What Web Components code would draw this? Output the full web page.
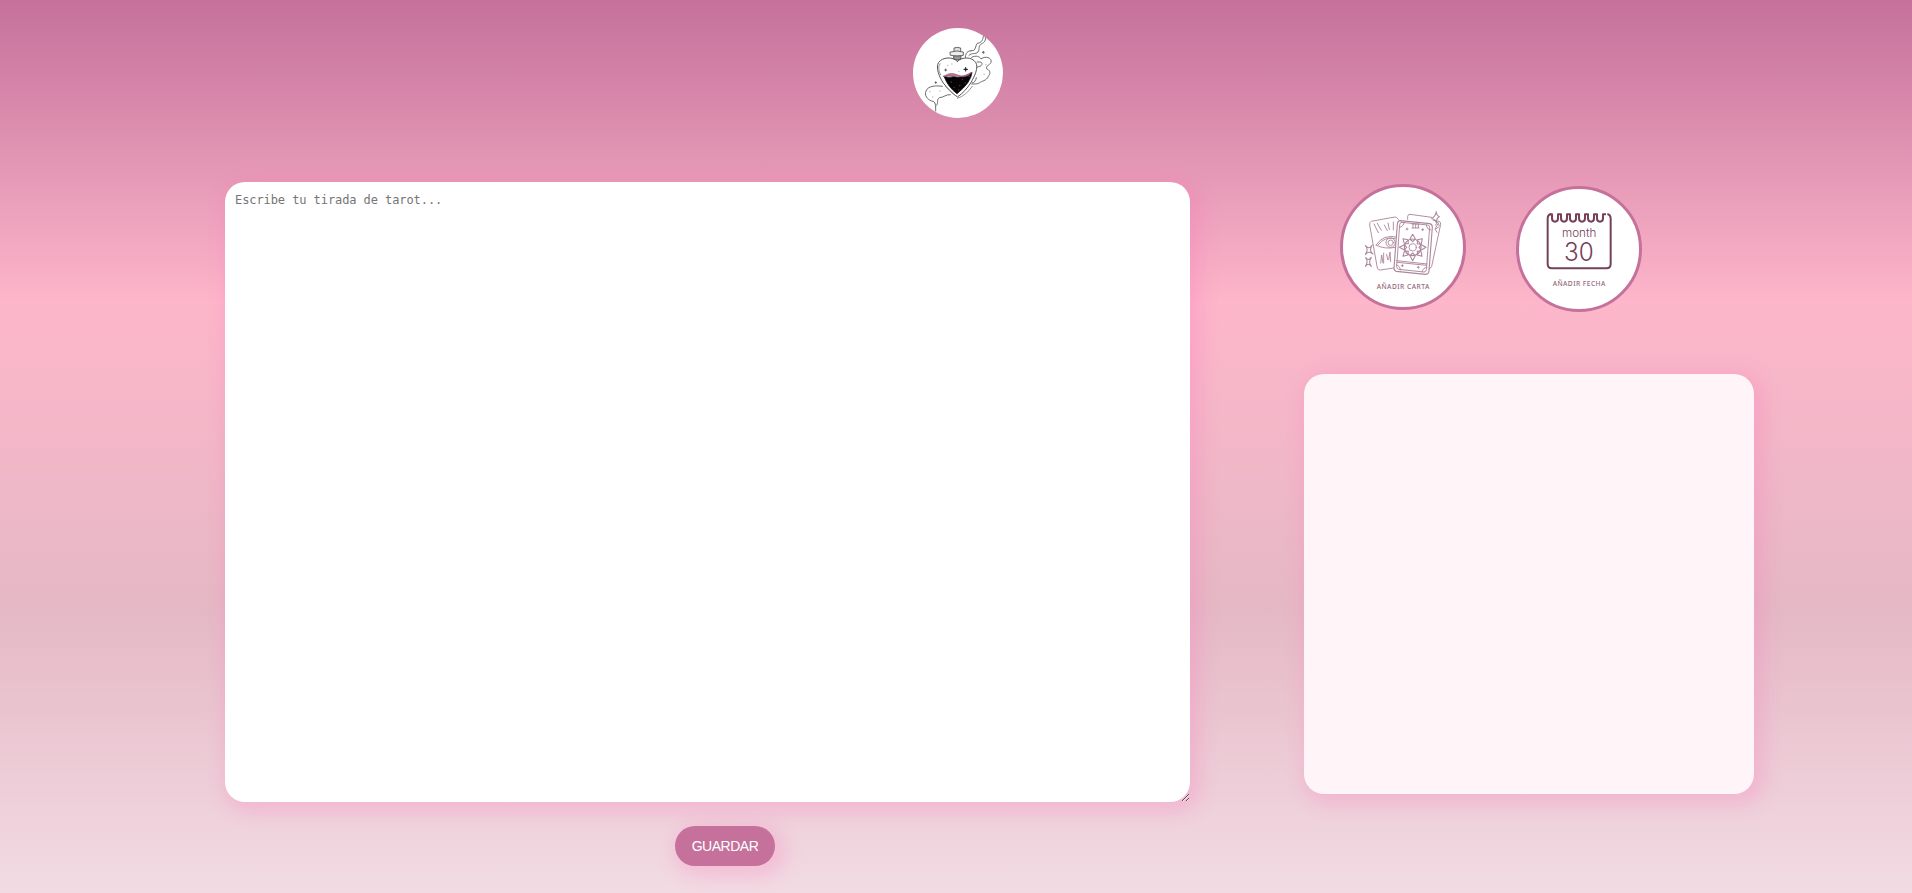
<!DOCTYPE html>
<html lang="es">
<head>
<meta charset="utf-8">
<title>Tarot</title>
<style>
body{margin:0;height:893px;overflow:hidden;font-family:"Liberation Sans",Arial,sans-serif;background:linear-gradient(#c5719b,#fdb6ca 33.9%,#e5b8c5 68%,#f2dbe3);--glow:5px 5px 17px 6px rgba(255,105,180,.22)}
</style>
</head>
<body>
<tarot-page></tarot-page>
<script>
const define = (name, html) => {
  const t = document.createElement('template');
  t.innerHTML = html;
  customElements.define(name, class extends HTMLElement {
    constructor() {
      super();
      this.attachShadow({mode: 'open'}).appendChild(t.content.cloneNode(true));
    }
  });
};

define('potion-logo', `
<style>
:host{display:block;width:90px;height:90px;border-radius:50%;background:#fff;overflow:hidden}
svg{display:block}
</style>
<svg width="90" height="90" viewBox="39 39 270 270" fill="none" stroke="#555" stroke-width="2.6" stroke-linecap="round" stroke-linejoin="round">
  <path d="M162 112v-13q9-4 20 0v13" fill="#ddd"/>
  <path d="M151 111q20-6 39 0v10q-18 6-38 0z" fill="#eee"/>
  <path d="M161 124v8q11 6 22 0v-8z" fill="#999"/>
  <path d="M172 139C158 124 128 126 116 142c-10 15 2 45 14 62 12 16 26 30 42 42 16-10 30-27 40-42 11-18 25-47 15-62-12-17-40-17-55-3z" stroke-width="3"/>
  <path d="M120 146q-9 12 2 34M217 214q-20 29-45 36M136 214q16 20 34 30" stroke="#888"/>
  <path d="M132 184q12 6 28 1 30 6 56-13-3 31-45 64-26-18-39-52z" fill="#050505" stroke="#111"/>
  <path d="M132 184c16-12 28-10 43-3 16 5 25-2 40-9-8 12-21 15-37 12-16-6-29 1-46 0z" fill="#c4709b" stroke="#9c5279" stroke-width="2"/>
  <path d="M197 158v10M192 163h10" stroke="#222" stroke-width="3.5"/>
  <path d="M137 162v6M134 165h6M250 109v6M247 112h6M107 200v5M105 203h5"/>
  <path d="M196 127c0-18 14-22 25-20 8-8 5-16 11-22 14-1 17-13 18-21M207 121c9-9 19-2 27-10 6-10 0-18 10-24 10-5 14-10 12-22"/>
  <path d="M215 127c14-8 25-1 28 5 14-11 34-3 30 10-4 10-16 9-13 19 14 7 10 17 5 23-6 14-20 14-26 19-8 6-18 3-24 4M232 141c8 0 15-1 14 7-3 7-10 7-14 8M229 188q-2 14-12 16"/>
  <path d="M127 214c-17-3-43-2-49 14-6 12 4 26 17 30 13 2 12 12 12 30M151 239c-13-2-20 9-33 9-9 5-2 16-8 23"/>
  <path d="M89 230h1M98 246h1M119 228h1M257 149h1M252 178h1M212 110h1M143 151h1M155 147h1M176 170h1M207 184h1" stroke="#777" stroke-width="2"/>
  <path d="M153 201h2M178 212h2M195 204h2M175 225h2M162 217h1M187 194h1" stroke="#883557"/>
</svg>`);

define('round-button', `
<style>
:host{display:block;box-sizing:border-box;width:126px;height:126px;border:3px solid #c5719b;border-radius:50%;background:#fff;overflow:hidden}
</style>
<slot></slot>`);

define('card-art', `
<style>:host,svg{display:block}text{font-family:"Noto Sans","Open Sans",sans-serif;font-weight:500}</style>
<svg width="120" height="120" viewBox="39 36 360 360" fill="none" stroke="#ac879a" stroke-width="2.8" stroke-linecap="round" stroke-linejoin="round">
  <path d="M205 133l-6-6q-4-2-10 0l-65 12q-6 3-5 11l23 129q2 7 9 6l40-6"/>
  <path d="M132 147l13 26M142 145l12 21M163 150l9 17M174 144l4 20M190 141v24M152 264l3-24 4 24M161 234v30M170 238l3 16M176 254l4-23 2 29"/>
  <path d="M138 210q22-33 62-24M138 210q26 14 59 7M145 209q20-26 51-18"/>
  <circle cx="182" cy="203" r="14"/><circle cx="182" cy="203" r="8"/>
  <path d="M233 133v-9q1-6 7-6l65 9M310 136l17 3q6 2 5 9l-27 126q-2 6-8 8M323 148l-8 14 6 10M317 162l9-6M316 151l7-10 5 11"/>
  <path d="M211 137l88 9q8 2 8 10l-10 132q-2 11-10 10l-88-9q-7-2-7-10l10-131q1-11 9-11z" stroke-width="3.4"/>
  <path d="M215 142l78 8q6 1 6 8l-10 126q-1 7-7 7l-76-8q-6-1-6-8l9-126q1-7 6-7zM199 257l92 10M201 262l89 9"/>
  <path d="M208 157q12-1 15-16M302 165q-12-2-13-15M199 270q12 2 12 15M291 277q-12 0-15 14"/>
  <path d="M246 147h21M246 159h21M249 148v10M257 148v10M265 148v10M231 159v6M228 162h6M278 161v6M275 164h6M217 269v6M214 272h6M265 274v6M262 277h6"/>
  <circle cx="248" cy="217" r="11"/><circle cx="248" cy="217" r="25" stroke-width="3.6"/>
  <path d="M240 192q3-6 8-14 5 8 8 14l-8 8zM262 194l15-3-3 15-12 1zM274 209l14 8-14 8-7-8zM273 229l3 15-14-4 0-12zM256 242l-8 15-8-15 8-8zM234 240l-15 4 4-15 12-1zM223 225l-15-8 15-8 7 8zM223 206l-4-15 15 3 1 12z" stroke-width="3.2"/>
  <path d="M319 110q-1 10 9 15-9 4-9 18-3-11-14-12 11-6 14-21z" stroke-width="3.2"/>
  <path d="M106 212q11 13 21-2-12 16 2 27-12-11-23 1 11-14 0-26zM107 248q9 11 17-1-10 14 0 27-9-12-18 0 10-14 1-26z" stroke-width="3.2"/>
  <text x="140" y="342" font-size="20" textLength="158" lengthAdjust="spacing" fill="#94697e" stroke="none">AÑADIR CARTA</text>
</svg>`);

define('date-art', `
<style>:host,svg{display:block}text{font-family:"Noto Sans","Open Sans",sans-serif;font-weight:500}.n{font-family:Inter,"Liberation Sans",sans-serif;font-weight:300}</style>
<svg width="120" height="120" viewBox="42 42 360 360" fill="none" stroke="#754158" stroke-width="5" stroke-linejoin="round">
  <path d="M138 117q-10 2-10 14v136q0 13 13 13h163q13 0 13-13V131q0-12-10-14" stroke-width="6"/>
  <path d="M134 118h7v12q0 10 9 10t9-10v-12h9v12q0 10 9 10t9-10v-12h9v12q0 10 9 10t9-10v-12h9v12q0 10 9 10t9-10v-12h9v12q0 10 9 10t9-10v-12h9v12q0 10 9 10t9-10v-12h9" stroke-width="6"/>
  <text class="n" x="171" y="186" font-size="37" textLength="103" lengthAdjust="spacingAndGlyphs" fill="#754158" stroke="none">month</text>
  <text class="n" x="177" y="257" font-size="75" textLength="89" lengthAdjust="spacingAndGlyphs" fill="#754158" stroke="none">30</text>
  <text x="143" y="334" font-size="20" textLength="158" fill="#94697e" stroke="none">AÑADIR FECHA</text>
</svg>`);

define('reading-editor', `
<style>
:host{display:flex;flex-direction:column;align-items:center;width:965px;gap:24px}
textarea{display:block;box-sizing:border-box;width:965px;height:620px;margin:0;border:0;border-radius:20px;padding:10px;background:#fff;box-shadow:var(--glow);font:12px/16px "DejaVu Sans Mono","Liberation Mono",monospace;letter-spacing:-.08px;outline:0}
textarea::placeholder{color:#757575}
button{width:100px;height:40px;margin:0 0 0 35px;padding:0;border:0;border-radius:20px;background:#c5719b;color:#fff;font:14px "Liberation Sans",Arial,sans-serif;letter-spacing:-.5px;box-shadow:var(--glow)}
</style>
<textarea placeholder="Escribe tu tirada de tarot..."></textarea>
<button>GUARDAR</button>`);

define('reading-panel', `
<style>:host{display:block;width:450px;height:420px;border-radius:20px;background:#fff4f8;box-shadow:var(--glow)}</style>`);

define('tarot-page', `
<style>
:host{display:block}
header{display:flex;padding:28px 0 64px 913px}
main{display:flex;gap:114px;padding-left:225px}
aside{display:flex;flex-direction:column;gap:64px}
.actions{display:flex;gap:50px;height:126px;padding:2px 0 0 36px}
.actions round-button:last-child{margin-top:2px}
</style>
<header><potion-logo></potion-logo></header>
<main>
  <reading-editor></reading-editor>
  <aside>
    <div class="actions">
      <round-button><card-art></card-art></round-button>
      <round-button><date-art></date-art></round-button>
    </div>
    <reading-panel></reading-panel>
  </aside>
</main>`);
</script>
</body>
</html>
